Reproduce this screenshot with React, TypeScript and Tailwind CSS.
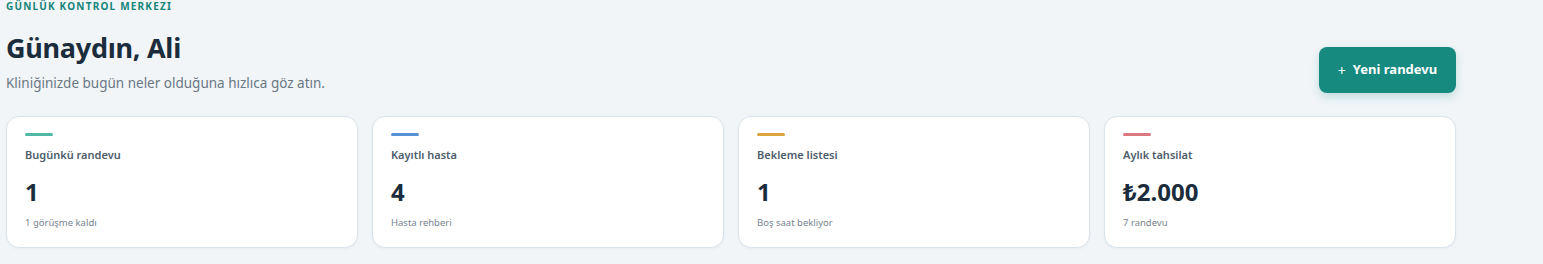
const stats = [
  { label: 'Bugünkü randevu', value: '1', note: '1 görüşme kaldı', accent: 'bg-[#4fb9a6]' },
  { label: 'Kayıtlı hasta', value: '4', note: 'Hasta rehberi', accent: 'bg-[#5592d6]' },
  { label: 'Bekleme listesi', value: '1', note: 'Boş saat bekliyor', accent: 'bg-[#dca53e]' },
  { label: 'Aylık tahsilat', value: '₺2.000', note: '7 randevu', accent: 'bg-[#dd7780]' },
];

export default function App() {
  return (
    <div className="min-h-[264px] w-full bg-[#f1f5f8] font-['Noto_Sans',sans-serif]">
      <div className="w-[1456px] pl-[6px]">
        <div className="flex items-end justify-between">
          <div>
            <p className="text-[10px] font-bold uppercase leading-[13px] tracking-[0.12em] text-[#16857a]">
              Günlük Kontrol Merkezi
            </p>
            <h1 className="mt-[17px] text-[27px] font-bold leading-[36px] tracking-[-0.01em] text-[#1b2d3c]">
              Günaydın, Ali
            </h1>
            <p className="mt-[8px] text-[13.5px] leading-[19px] text-[#6a7784]">
              Kliniğinizde bugün neler olduğuna hızlıca göz atın.
            </p>
          </div>
          <button className="mb-[0px] flex h-[46px] w-[137px] items-center justify-center gap-[7px] rounded-[8px] bg-[#178a7f] text-[13px] font-bold text-white shadow-[0_4px_10px_rgba(23,138,127,0.22)]">
            <span className="text-[14px] font-normal">+</span>
            <span>Yeni randevu</span>
          </button>
        </div>

        <div className="mt-[23px] grid grid-cols-4 gap-[14px]">
          {stats.map((s) => (
            <div
              key={s.label}
              className="h-[132px] rounded-[13px] border border-[#dbe3ea] bg-white px-[18px] pt-[16px] shadow-[0_1px_3px_rgba(15,23,42,0.04)]"
            >
              <div className={`h-[3px] w-[28px] rounded-full ${s.accent}`} />
              <p className="mt-[11px] text-[11px] font-semibold leading-[16px] text-[#4d5d6b]">{s.label}</p>
              <p className="mt-[14px] text-[24px] font-bold leading-[30px] text-[#1b2d3c]">{s.value}</p>
              <p className="mt-[9px] text-[9.5px] leading-[14px] text-[#77838f]">{s.note}</p>
            </div>
          ))}
        </div>
      </div>
    </div>
  );
}
